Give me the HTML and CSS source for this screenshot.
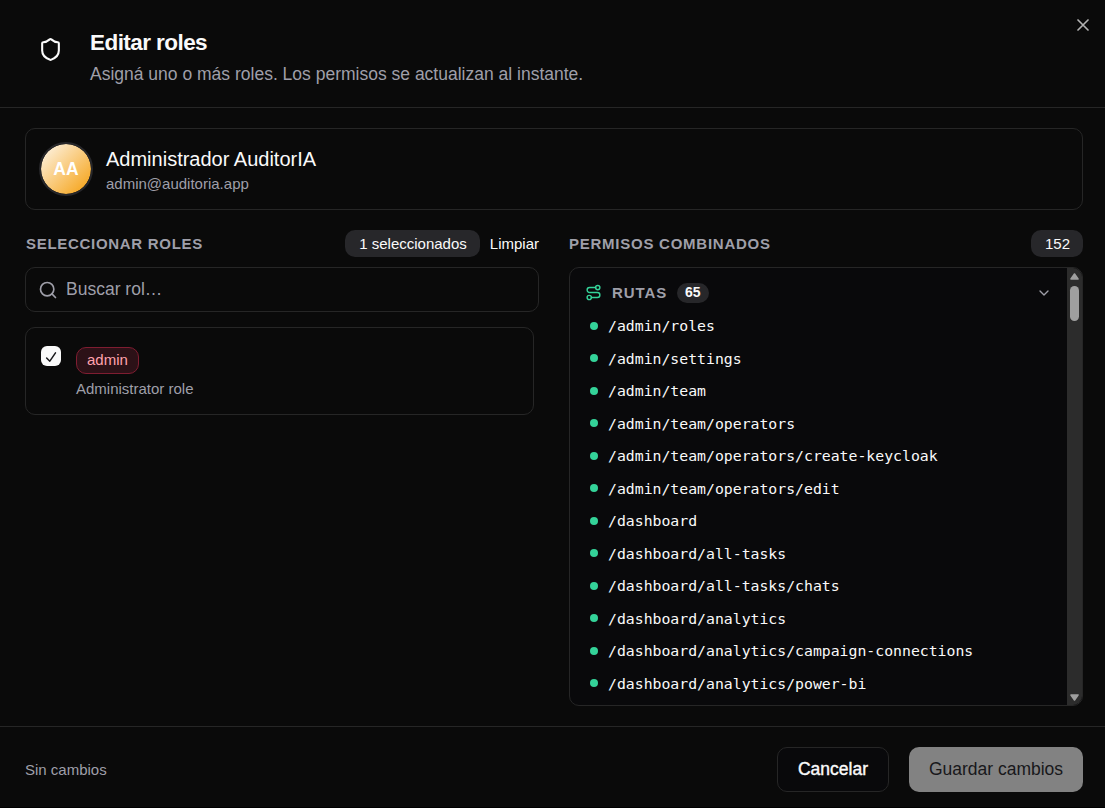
FILE: index.html
```
<!DOCTYPE html>
<html lang="es">
<head>
    <meta charset="UTF-8">
    <meta name="viewport" content="width=device-width, initial-scale=1.0">
    <title>Editar roles</title>
    <link rel="stylesheet" href="styles.css">
</head>
<body>
    <div class="modal">
        <!-- Header -->
        <header class="modal-header">
            <svg class="icon shield" viewBox="0 0 24 24"><path d="M20 13c0 5-3.5 7.5-7.66 8.95a1 1 0 0 1-.67-.01C7.5 20.5 4 18 4 13V6a1 1 0 0 1 1-1c2 0 4.5-1.2 6.24-2.72a1.17 1.17 0 0 1 1.52 0C14.51 3.81 17 5 19 5a1 1 0 0 1 1 1z"/></svg>
            <div class="heading">
                <h2>Editar roles</h2>
                <p>Asigná uno o más roles. Los permisos se actualizan al instante.</p>
            </div>
            <button class="close-btn" aria-label="Cerrar">
                <svg class="icon" viewBox="0 0 24 24"><path d="M18 6 6 18M6 6l12 12"/></svg>
            </button>
        </header>

        <main class="modal-body">
            <!-- User card -->
            <div class="user-card">
                <div class="avatar">AA</div>
                <div class="user-info">
                    <div class="user-name">Administrador AuditorIA</div>
                    <div class="user-email">admin@auditoria.app</div>
                </div>
            </div>

            <div class="columns">
                <!-- Roles -->
                <section class="roles">
                    <div class="column-header">
                        <h3>Seleccionar roles</h3>
                        <div class="actions">
                            <span class="badge">1 seleccionados</span>
                            <button class="clear-btn">Limpiar</button>
                        </div>
                    </div>
                    <div class="search">
                        <svg class="icon" viewBox="0 0 24 24"><circle cx="11" cy="11" r="8"/><path d="m21 21-4.3-4.3"/></svg>
                        <input type="text" placeholder="Buscar rol…">
                    </div>
                    <div class="role-card">
                        <span class="checkbox">
                            <svg class="icon" viewBox="0 0 15 15"><path d="M11.7 3.6 6.4 11.4 3.4 8.4"/></svg>
                        </span>
                        <div class="role-info">
                            <span class="role-tag">admin</span>
                            <p>Administrator role</p>
                        </div>
                    </div>
                </section>

                <!-- Permissions -->
                <section class="permissions">
                    <div class="column-header">
                        <h3>Permisos combinados</h3>
                        <span class="badge">152</span>
                    </div>
                    <div class="permission-box">
                        <div class="permission-content">
                            <div class="group-header">
                                <svg class="icon route" viewBox="0 0 24 24"><circle cx="6" cy="19" r="3"/><path d="M9 19h8.5a3.5 3.5 0 0 0 0-7h-11a3.5 3.5 0 0 1 0-7H15"/><circle cx="18" cy="5" r="3"/></svg>
                                <h4>Rutas</h4>
                                <span class="count">65</span>
                                <svg class="icon chevron" viewBox="0 0 24 24"><path d="m6 9 6 6 6-6"/></svg>
                            </div>
                            <ul>
                                <li>/admin/roles</li>
                                <li>/admin/settings</li>
                                <li>/admin/team</li>
                                <li>/admin/team/operators</li>
                                <li>/admin/team/operators/create-keycloak</li>
                                <li>/admin/team/operators/edit</li>
                                <li>/dashboard</li>
                                <li>/dashboard/all-tasks</li>
                                <li>/dashboard/all-tasks/chats</li>
                                <li>/dashboard/analytics</li>
                                <li>/dashboard/analytics/campaign-connections</li>
                                <li>/dashboard/analytics/power-bi</li>
                            </ul>
                        </div>
                        <div class="scrollbar">
                            <svg viewBox="0 0 9 7"><path d="M4.5 1 8 6H1z"/></svg>
                            <div class="thumb"></div>
                            <svg class="arrow-down" viewBox="0 0 9 7"><path d="M4.5 6 8 1H1z"/></svg>
                        </div>
                    </div>
                </section>
            </div>
        </main>

        <!-- Footer -->
        <footer class="modal-footer">
            <span class="status">Sin cambios</span>
            <button class="btn btn-cancel">Cancelar</button>
            <button class="btn btn-save">Guardar cambios</button>
        </footer>
    </div>
</body>
</html>
```

FILE: styles.css
```
/* General Styles */
* {
    box-sizing: border-box;
}

body {
    margin: 0;
    background: #000;
    color: #fafafa;
    font-family: Arial, "Liberation Sans", sans-serif;
}

h2, h3, h4, p, ul {
    margin: 0;
    padding: 0;
}

button, input {
    font-family: inherit;
    background: none;
    border: none;
    padding: 0;
    color: inherit;
}

.icon {
    display: block;
    flex: none;
    fill: none;
    stroke: currentColor;
    stroke-width: 2;
    stroke-linecap: round;
    stroke-linejoin: round;
}

.modal {
    height: 807px;
    background: #0a0a0a;
    display: flex;
    flex-direction: column;
}

/* Header */
.modal-header {
    height: 108px;
    flex: none;
    display: flex;
    align-items: flex-start;
    padding: 0 12px 0 38px;
    border-bottom: 1px solid #262626;
}

.shield {
    width: 25px;
    height: 25px;
    margin-top: 37px;
}

.heading {
    flex: 1;
    padding: 29px 0 0 27px;
}

.heading h2 {
    font-size: 22.5px;
    line-height: 28px;
    letter-spacing: -0.56px;
}

.heading p {
    margin-top: 5px;
    font-size: 17.5px;
    line-height: 25px;
    color: #9f9fa9;
}

.close-btn {
    margin-top: 15px;
    opacity: 0.7;
}

.close-btn .icon {
    width: 20px;
    height: 20px;
}

/* Body */
.modal-body {
    flex: 1;
    min-height: 0;
    padding: 20px 22px 20px 25px;
    display: flex;
    flex-direction: column;
}

.user-card {
    height: 82px;
    flex: none;
    display: flex;
    align-items: center;
    gap: 13px;
    padding: 0 13px;
    border: 1px solid #262626;
    border-radius: 10px;
}

.avatar {
    width: 54px;
    height: 54px;
    border: 2px solid #27272a;
    border-radius: 50%;
    background: linear-gradient(135deg, #fdf3e3 5%, #f59e0b);
    background-clip: padding-box;
    display: flex;
    align-items: center;
    justify-content: center;
    font-size: 17.5px;
    font-weight: bold;
    color: #fff;
}

.user-info {
    padding-top: 2px;
}

.user-name {
    font-size: 20px;
    line-height: 25px;
}

.user-email {
    font-size: 15px;
    line-height: 20px;
    margin-top: 2px;
    color: #9f9fa9;
}

.columns {
    flex: 1;
    min-height: 0;
    display: grid;
    grid-template-columns: 514px 514px;
    gap: 30px;
    padding-top: 20px;
}

.column-header {
    height: 27px;
    display: flex;
    align-items: center;
    justify-content: space-between;
    margin-bottom: 10px;
}

.column-header h3 {
    font-size: 15px;
    letter-spacing: 0.75px;
    text-transform: uppercase;
    color: #9f9fa9;
}

.actions {
    display: flex;
    align-items: center;
    gap: 10px;
}

.badge {
    height: 27px;
    line-height: 27px;
    padding: 0 13px 0 14px;
    border-radius: 10px;
    background: #27272a;
    font-size: 15px;
}

.clear-btn {
    font-size: 15px;
}

/* Roles */
.roles h3 {
    padding-left: 1px;
    letter-spacing: 0.7px;
}

.search {
    height: 45px;
    display: flex;
    align-items: center;
    gap: 8px;
    padding: 0 12px;
    border: 1px solid #262626;
    border-radius: 10px;
    color: #9f9fa9;
}

.search .icon {
    width: 20px;
    height: 20px;
}

.search input {
    flex: 1;
    font-size: 17.5px;
}

.search input::placeholder {
    color: #9f9fa9;
}

.role-card {
    width: 509px;
    height: 88px;
    margin-top: 15px;
    padding: 18px 15px;
    display: flex;
    gap: 15px;
    border: 1px solid #262626;
    border-radius: 10px;
}

.checkbox {
    width: 20px;
    height: 20px;
    border-radius: 6px;
    background: #fafafa;
    color: #18181b;
    display: flex;
    align-items: center;
    justify-content: center;
}

.checkbox .icon {
    width: 16px;
    height: 16px;
    margin-top: 1px;
    stroke-width: 1.4;
}

.role-tag {
    display: inline-block;
    height: 27px;
    line-height: 23px;
    margin-top: 1px;
    padding: 0 10px;
    border: 1px solid #7f1d31;
    border-radius: 10px;
    background: #2c1117;
    color: #ffa1ad;
    font-size: 15px;
}

.role-info p {
    margin-top: 5px;
    font-size: 15px;
    line-height: 20px;
    color: #9f9fa9;
}

/* Permissions */
.permissions {
    display: flex;
    flex-direction: column;
    min-height: 0;
}

.permission-box {
    flex: 1;
    min-height: 0;
    display: flex;
    border: 1px solid #262626;
    border-radius: 10px;
    overflow: hidden;
    background: #09090b;
}

.permission-content {
    flex: 1;
    padding: 15px 15px 0;
}

.group-header {
    height: 20px;
    display: flex;
    align-items: center;
}

.group-header h4 {
    margin: -1px 10px 0;
    font-size: 15px;
    letter-spacing: 0.9px;
    text-transform: uppercase;
    color: #9f9fa9;
}

.route {
    width: 17px;
    height: 17px;
    margin-top: -1px;
    color: #34d399;
}

.count {
    height: 20px;
    line-height: 19px;
    padding: 0 8px;
    border-radius: 10px;
    background: #27272a;
    font-size: 14px;
    font-weight: bold;
}

.chevron {
    width: 16px;
    height: 16px;
    margin-left: auto;
    color: #9f9fa9;
}

.permission-content ul {
    margin-top: 6.5px;
    list-style: none;
    font-family: Consolas, "DejaVu Sans Mono", monospace;
    font-size: 14.8px;
}

.permission-content li {
    height: 32.5px;
    display: flex;
    align-items: center;
    gap: 10px;
    padding-left: 5px;
    white-space: nowrap;
}

.permission-content li::before {
    content: "";
    width: 8px;
    height: 8px;
    border-radius: 50%;
    background: #34d399;
}

.scrollbar {
    width: 15px;
    background: #2c2c2c;
    display: flex;
    flex-direction: column;
    align-items: center;
    padding: 5px 0 4px;
}

.scrollbar svg {
    width: 9px;
    height: 7px;
    fill: #9f9f9f;
    stroke: #9f9f9f;
    stroke-width: 1.6;
    stroke-linejoin: round;
    overflow: visible;
}

.thumb {
    width: 9px;
    height: 35px;
    margin-top: 6px;
    border-radius: 5px;
    background: #9f9f9f;
}

.scrollbar .arrow-down {
    margin-top: auto;
}

/* Footer */
.modal-footer {
    height: 81px;
    flex: none;
    display: flex;
    align-items: center;
    gap: 20px;
    padding: 5px 22px 0 25px;
    border-top: 1px solid #262626;
}

.status {
    margin-right: auto;
    font-size: 15px;
    color: #9f9fa9;
}

.btn {
    height: 45px;
    border-radius: 10px;
    font-size: 17.5px;
}

.btn-cancel {
    width: 112px;
    border: 1px solid #262626;
    background: #09090b;
    -webkit-text-stroke: 0.4px #fafafa;
}

.btn-save {
    width: 174px;
    background: #828282;
    color: #18181b;
}
```
